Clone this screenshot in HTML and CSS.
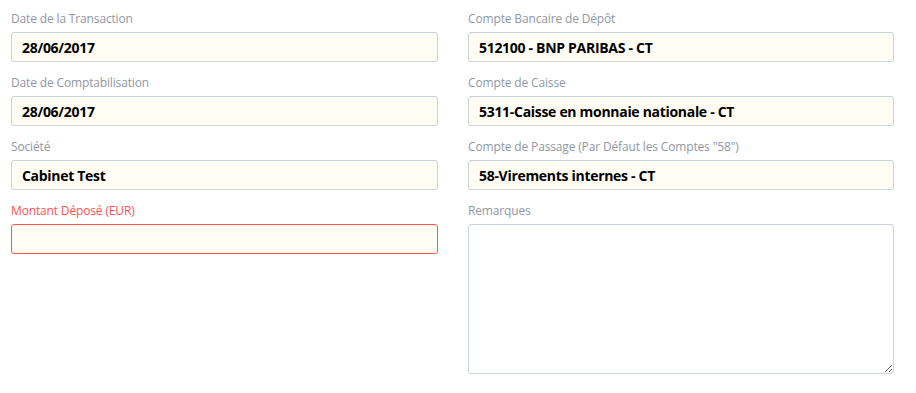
FILE: index.html
```html
<!DOCTYPE html>
<html lang="fr">
<head>
  <meta charset="UTF-8">
  <meta name="viewport" content="width=device-width, initial-scale=1.0">
  <title>Dépôt</title>
  <link rel="stylesheet" href="styles.css">
</head>
<body>
  <form class="deposit-form">
    <!-- colonne gauche -->
    <div class="col">
      <div class="field">
        <label for="date_transaction">Date de la Transaction</label>
        <input type="text" id="date_transaction" value="28/06/2017">
      </div>
      <div class="field">
        <label for="date_compta">Date de Comptabilisation</label>
        <input type="text" id="date_compta" value="28/06/2017">
      </div>
      <div class="field">
        <label for="societe">Société</label>
        <input type="text" id="societe" value="Cabinet Test">
      </div>
      <div class="field has-error">
        <label for="montant">Montant Déposé (EUR)</label>
        <input type="text" id="montant" value="">
      </div>
    </div>

    <!-- colonne droite -->
    <div class="col">
      <div class="field">
        <label for="compte_banque">Compte Bancaire de Dépôt</label>
        <input type="text" id="compte_banque" value="512100 - BNP PARIBAS - CT">
      </div>
      <div class="field">
        <label for="compte_caisse">Compte de Caisse</label>
        <input type="text" id="compte_caisse" value="5311-Caisse en monnaie nationale - CT">
      </div>
      <div class="field">
        <label for="compte_passage">Compte de Passage (Par Défaut les Comptes "58")</label>
        <input type="text" id="compte_passage" value="58-Virements internes - CT">
      </div>
      <div class="field">
        <label for="remarques">Remarques</label>
        <textarea id="remarques"></textarea>
      </div>
    </div>
  </form>
</body>
</html>
```

FILE: styles.css
```css
body {
  font-family: "Open Sans", "DejaVu Sans", sans-serif;
  margin: 0;
  padding: 9px 11px 0;
  background: #fff;
}
.deposit-form {
  display: grid;
  grid-template-columns: 427px 426px;
  column-gap: 30px;
}
.field {
  display: flex;
  flex-direction: column;
  margin-bottom: 11px;
}
.field label {
  font-size: 12px;
  line-height: 20px;
  color: #8f98a3;
  margin-bottom: 3px;
  letter-spacing: -0.15px;
}
.field input {
  box-sizing: border-box;
  height: 30px;
  border: 1px solid #ccd3da;
  border-radius: 3px;
  background: #fffcf3;
  padding: 0 10px;
  font-family: inherit;
  font-size: 14px;
  font-weight: bold;
  color: #000;
  letter-spacing: -0.3px;
  outline: none;
}
.field textarea {
  box-sizing: border-box;
  height: 150px;
  border: 1px solid #ccd3da;
  border-radius: 3px;
  background: #fff;
  resize: vertical;
  outline: none;
}
.has-error label {
  color: #ff5252;
}
.has-error input {
  border-color: #ff5252;
}
```
